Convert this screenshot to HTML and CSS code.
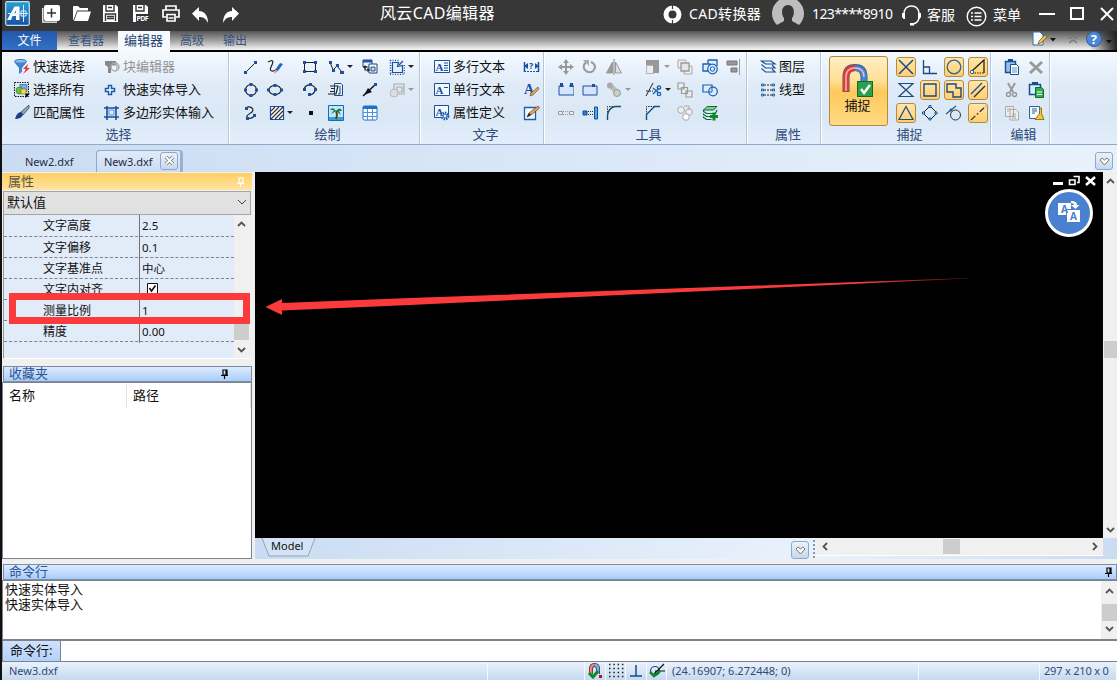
FILE: index.html
```
<!DOCTYPE html>
<html lang="zh-CN">
<head>
    <meta charset="UTF-8">
    <meta name="viewport" content="width=device-width, initial-scale=1.0">
    <title>风云CAD编辑器</title>
    <link rel="stylesheet" href="styles.css">
</head>
<body>
    <!-- Title bar -->
    <header class="titlebar">
        <div class="quick-access">
            <svg class="logo" width="25" height="25" viewBox="0 0 25 25"><defs><linearGradient id="lg" x1="0" y1="0" x2="0" y2="1"><stop offset="0" stop-color="#2a9fd8"/><stop offset="1" stop-color="#1a4fa0"/></linearGradient></defs><rect x=".7" y=".7" width="23.6" height="23.6" rx="1.5" fill="url(#lg)" stroke="#b8e4fa" stroke-width="1.2"/><path d="M2 19 9.500 5.500h5V19h-3.500v-4H7.500L6 19zM9 12.500h2V9.500z" fill="#fff"/><path d="M3 12.500h20M18.500 4v17M16 10h5v5h-5z" fill="none" stroke="#d8f3ff"/></svg>
            <svg class="qa-new" width="18" height="18" viewBox="0 0 18 18"><path d="M.8 3v14.200H15" fill="none" stroke="#fff" stroke-width="1.300"/><rect x="2" y="0" width="16" height="16" rx="2" fill="#fff"/><path d="M9.500 3.500v9M5 8h9" stroke="#333" stroke-width="1.500"/></svg>
            <svg class="qa-open" width="19" height="17" viewBox="0 0 19 17"><path d="M1 15V2q0-1 1-1h4l2 2h8v2.500H5L1.500 15z" fill="#fff"/><path d="M5.500 6.500H19L16 16H2z" fill="#fff"/></svg>
            <svg class="qa-save" width="17" height="17" viewBox="0 0 17 17"><path d="M1 0h13l2 2v15H1z" fill="#fff"/><path d="M4 0v6h8V0M6 2.500h4M3.500 16V9h10v7M5 11.500h7M5 13.500h7" fill="none" stroke="#333" stroke-width="1.400"/></svg>
            <svg class="qa-pdf" width="17" height="17" viewBox="0 0 17 17"><path d="M1 0h13l2 2v15H1z" fill="#fff"/><path d="M4 0v6h8V0M6 2.500h4" fill="none" stroke="#333" stroke-width="1.400"/><path d="M4 9h13v8H4z" fill="#333"/><text x="4.500" y="16" font-size="7" font-weight="700" textLength="12" fill="#fff">PDF</text></svg>
            <svg class="qa-print" width="18" height="17" viewBox="0 0 18 17"><path d="M4 5V1h10v4M4 12H1V5h16v7h-3M5 9.500h8V16H5zM6.500 13h5" fill="none" stroke="#fff" stroke-width="1.700"/></svg>
            <svg class="qa-undo" width="17" height="17" viewBox="0 0 17 17"><path d="M0 6.500 7 0v4c6 0 9 5 9 12-2-4-4-6-9-6v4z" fill="#fff"/></svg>
            <svg width="17" height="17" viewBox="0 0 17 17"><path d="M17 6.500 10 0v4C4 4 1 9 1 16c2-4 4-6 9-6v4z" fill="#fff"/></svg>
        </div>
        <div class="app-title">风云CAD编辑器</div>
        <div class="account">
            <svg width="19" height="19" viewBox="0 0 19 19"><circle cx="9.500" cy="9.500" r="6.500" fill="none" stroke="#fff" stroke-width="5"/><path d="M9.500 0v4M9.500 15v4" stroke="#373737" stroke-width="1.200"/></svg>
            <span class="converter">CAD转换器</span>
            <svg class="avatar" width="32" height="28" viewBox="0 0 32 28"><path d="M5 25A16 16 0 1 1 27 25L20 21v-3c3-3 3-13-4-13s-7 10-4 13v3z" fill="#bdbdbd"/></svg>
            <span class="user">123****8910</span>
            <svg class="headset" width="21" height="21" viewBox="0 0 21 21"><path d="M3 11V8q1-7 7.500-7T18 8v3M18 13q-1 5-6 6" fill="none" stroke="#fff" stroke-width="1.400"/><path d="M1 8h3v6H2.500L1 12zM20 8h-3v6h1.500L20 12zM9 18h4v2.500H9z" fill="#fff"/></svg>
            <span class="service">客服</span>
            <svg class="menu-icon" width="21" height="21" viewBox="0 0 21 21"><circle cx="10.500" cy="10.500" r="9.300" fill="none" stroke="#fff" stroke-width="1.400"/><path d="M5 7h2M5 10.500h2M5 14h2M8.500 7h7M8.500 10.500h7M8.500 14h7" stroke="#fff" stroke-width="1.600"/></svg>
            <span class="menu-label">菜单</span>
            <svg class="win-buttons" width="77" height="18" viewBox="0 0 77 18"><path d="M0 9h16" stroke="#fff" stroke-width="2"/><rect x="32" y="3" width="12" height="11" fill="none" stroke="#fff" stroke-width="2"/><path d="m62 3 12 12M74 3 62 15" stroke="#fff" stroke-width="2"/></svg>
        </div>
    </header>

    <!-- Ribbon tabs -->
    <nav class="tabs">
        <div class="tab file">文件</div>
        <div class="tab viewer">查看器</div>
        <div class="tab active">编辑器</div>
        <div class="tab">高级</div>
        <div class="tab output">输出</div>
        <div class="tab-tools">
            <svg width="85" height="19" viewBox="0 0 85 19"><path d="M1 1h7l3 3v10H1z" fill="#f4faff" stroke="#3b6a9e"/><path d="m6 13 1-3 6-6 2 2-6 6z" fill="#f2c04a" stroke="#6b4a1e" stroke-width=".7"/><path d="M18 7h6l-3 3.500zM74 9h6l-3 3.500z" fill="#111"/><path d="m37 8 4-3 4 3M37 12l4-3 4 3" fill="none" stroke="#777" stroke-width="1.200"/><circle cx="62" cy="8" r="7.500" fill="#4d86d2" stroke="#2b5da8"/><text x="58.700" y="13" font-size="13" font-weight="700" fill="#fff">?</text></svg>
        </div>
    </nav>

    <!-- Ribbon -->
    <section class="ribbon">
        <div class="group g-select">
            <div class="items">
                <div class="item"><svg width="17" height="16" viewBox="0 0 17 16"><ellipse cx="6.500" cy="2.500" rx="6" ry="2" fill="#8cc4f0" stroke="#2b6cb0"/><path d="M.5 3.500 5 9v6l3-2V9l4.500-5.500z" fill="#3f87cc"/><path d="m14 5-5 5h3l-3 5 7-6h-3z" fill="#e8303c"/></svg>快速选择</div>
                <div class="item muted"><svg width="17" height="16" viewBox="0 0 17 16"><path d="M1 2h11v4H9L7 8v6H4V8L1 6z" fill="#888"/><circle cx="11" cy="8" r="4" fill="none" stroke="#aaa" stroke-width="1.500"/><path d="M9 6h4v5" fill="none" stroke="#999"/></svg>块编辑器</div>
                <div class="item"><svg width="17" height="16" viewBox="0 0 17 16"><rect x=".5" y=".5" width="14" height="14" fill="none" stroke="#111" stroke-dasharray="1.500 1"/><rect x="6" y="2.500" width="7" height="7" fill="#6caee8" stroke="#2b6cb0" stroke-width=".7"/><circle cx="5.500" cy="8.500" r="3.500" fill="#6fba4a" stroke="#2f7a28" stroke-width=".7"/><path d="M7 7h5v5H7z" fill="#eadb48" stroke="#8f7d10" stroke-width=".7"/><path d="M11.500 11.500H16L11.500 16z" fill="#000"/></svg>选择所有</div>
                <div class="item"><svg width="17" height="16" viewBox="0 0 17 16"><path d="M4.500 3.500h3v3h3v3h-3v3h-3v-3h-3v-3h3z" fill="#fff" stroke="#1b5aa8" stroke-width="1.500"/></svg>快速实体导入</div>
                <div class="item"><svg width="17" height="16" viewBox="0 0 17 16"><path d="M15 0 7 7l2 3 6-7z" fill="#8ab" stroke="#334" stroke-width=".7"/><path d="M7 7q-4 0-6 7 6 0 8-4z" fill="#1d3f86"/></svg>匹配属性</div>
                <div class="item"><svg width="17" height="16" viewBox="0 0 17 16"><path d="M3 1v14M12 1v14M0 3h15M0 12h15" fill="none" stroke="#174f9c" stroke-width="1.600"/><path d="M5 5h5v5H5z" fill="none" stroke="#5f96d6"/></svg>多边形实体输入</div>
            </div>
            <div class="caption">选择</div>
        </div>

        <div class="group g-draw">
            <div class="items">
                <svg width="16" height="16"><path d="M3 13 13 3" stroke="#222"/><path d="M1 12h3v3H1zM11 2h3v3h-3z" fill="#1c4f9e"/></svg>
                <svg width="16" height="16"><path d="M1 3c7-4 5 1 3 5s1 5 5 3" fill="none" stroke="#222" stroke-width="1.200"/><path d="m8 11 5-7 3 1-5 7z" fill="#2767c4"/><path d="m8 11 3 1-4 3z" fill="#e88"/></svg>
                <svg width="16" height="16"><path d="M2.500 3.500h11v9h-11z" fill="none" stroke="#222"/><path d="M1 2h3v3H1zM12 2h3v3h-3zM1 11h3v3H1zM12 11h3v3h-3z" fill="#1c4f9e"/></svg>
                <div class="cell"><svg width="16" height="16"><path d="m2 3 3 8 4-4 5 6" fill="none" stroke="#222"/><path d="M1 2h3v3H1zM4 10h3v3H4zM8 5h3v3H8zM12 12h4v3h-4z" fill="#1c4f9e"/></svg><i class="arrow"></i></div>
                <svg width="16" height="16"><path d="M1 1h9v7H1z" fill="#eaf4ff" stroke="#246"/><path d="M1 1h9v2.500H1z" fill="#25a"/><path d="M7 5h8v9H7z" fill="#fff" stroke="#246"/><path d="M9 8h4v4H9z" fill="#bcd8f6" stroke="#1c4f9e"/><path d="M3 7v4h4M1.500 8.500 3 7l1.500 1.500M5.500 9.500 7 11l-1.500 1.500" fill="none" stroke="#222" stroke-width="1.200"/></svg>
                <div class="cell"><svg width="16" height="16"><path d="M3.500 3.500h6l-1 4 5-1v7h-10z" fill="#e6f1fd" stroke="#1c4f9e" stroke-width="1.200"/><path d="m10 6 4-4" stroke="#1c4f9e" stroke-width="1.200"/><path d="M1 1.500h10M1.500 1v14M1 15.500h14M15.500 6v9" fill="none" stroke="#1c4f9e" stroke-width="1.600" stroke-dasharray="1 1.500"/></svg><i class="arrow"></i></div>

                <svg width="16" height="16"><circle cx="8" cy="8" r="5.500" fill="none" stroke="#222" stroke-width="1.200"/><path d="M6.500 1h3v3h-3zM6.500 12h3v3h-3zM1 6.500h3v3H1zM12 6.500h3v3h-3z" fill="#1c4f9e"/></svg>
                <svg width="16" height="16"><ellipse cx="8" cy="8" rx="6" ry="4.500" fill="none" stroke="#222" stroke-width="1.200"/><path d="M6.500 2h3v3h-3zM6.500 11h3v3h-3zM0 6.500h3v3H0zM13 6.500h3v3h-3z" fill="#1c4f9e"/></svg>
                <svg width="16" height="16"><path d="M2 7q2-5 7-4 6 2 4 6-2 4-6 4" fill="none" stroke="#222" stroke-width="1.200"/><path d="M1 6h3v3H1zM7 1h3v3H7zM12 6h3v3h-3zM6 11h3v3H6z" fill="#1c4f9e"/></svg>
                <svg width="16" height="16"><path d="M6.500 1.500H13l1.500 1.500v10.500h-8z" fill="#e5f2ff" stroke="#1b4d83"/><path d="M2 4h8L8 12H0M3 6.500h4M2 9.500h4" fill="none" stroke="#222" stroke-width="1.200"/><path d="M12 4v8h-2" fill="none" stroke="#1b4d83"/></svg>
                <svg width="16" height="16"><path d="M1 14 14 2" stroke="#111" stroke-width="1.500"/><path d="m2 13 4-7 4 4z" fill="#111"/><path d="M12 1h3v3h-3z" fill="#1c4f9e"/></svg>
                <div class="cell"><svg width="16" height="16"><path d="M5 2h10v10H5zM8 5h5v5H8z" fill="none" stroke="#aaa" stroke-width="1.200"/><circle cx="5" cy="11" r="4" fill="#ddd" stroke="#bbb"/></svg><i class="arrow dim"></i></div>

                <svg width="16" height="16"><path d="M3 3c4-3 9 1 6 4-4 3-7 4-4 6 3 1 6-1 7-3" fill="none" stroke="#222" stroke-width="1.200"/><path d="M2 2h3v3H2zM3 12h3v3H3zM10 9h3v3h-3z" fill="#1c4f9e"/></svg>
                <div class="cell hatch"><svg width="16" height="16"><path d="M1.500 1.500h13v13h-13z" fill="#fff" stroke="#1c4f9e" stroke-width="1.200"/><path d="m2 6 4-4M2 10l8-8M2 14 14 2M6 14l8-8M10 14l4-4" stroke="#333" stroke-width="1.200"/></svg><i class="arrow"></i></div>
                <svg width="16" height="16"><path d="M7 6h4v4H7z" fill="#111"/></svg>
                <svg width="16" height="16"><path d="M.5.500h15v15H.5z" fill="#bfe6ff" stroke="#1b6eae"/><path d="M1 12h14v3H1z" fill="#3b9cd8"/><path d="M8 14q2-4 0-8" fill="none" stroke="#5b4216" stroke-width="1.800"/><path d="M8 6Q5 1 2 5l4 0-3 4 5-3 5 4-2-4h3Q12 1 8 6z" fill="#16803a"/></svg>
                <svg width="16" height="16"><rect x="1" y="1" width="14" height="14" rx="1.500" fill="#fff" stroke="#1d71c8"/><path d="M1 1h14v3H1z" fill="#1d71c8"/><path d="M1 7.500h14M1 11.500h14M5.500 4v11M10.500 4v11" stroke="#4d94dc"/></svg>
                <span></span>
            </div>
            <div class="caption">绘制</div>
        </div>

        <div class="group g-text">
            <div class="items">
                <div class="item"><svg width="16" height="16"><path d="M.5 1.500h15v12H.5z" fill="#f2f8ff" stroke="#1c4f9e"/><text class="serif-a" x="1.500" y="12">A</text><path d="M10 4h4M10 6.500h4M10 9h4M10 11.500h4" stroke="#1c4f9e"/></svg>多行文本</div>
                <svg width="17" height="16"><path d="M1 12.500h15" stroke="#1c4f9e" stroke-dasharray="2 1"/><path d="M1.500 3v10M15.500 3v10" stroke="#1c4f9e" stroke-width="1.500"/><path d="m1 7 4-3v6zM16 7l-4-3v6z" fill="#1c4f9e"/><text x="6" y="10" font-size="9" font-weight="700" fill="#1c4f9e">?</text></svg>
                <div class="item"><svg width="16" height="16"><path d="M.5 1.500h15v12H.5z" fill="#f2f8ff" stroke="#1c4f9e"/><text class="serif-a" x="1.500" y="12">A</text><path d="M10 5.500h4" stroke="#1c4f9e"/></svg>单行文本</div>
                <svg width="17" height="16"><text class="serif-a big" x="1" y="12">A</text><path d="m7 14 1-3 7-6 1 2-6 6z" fill="#e8a848" stroke="#543" stroke-width=".6"/></svg>
                <div class="item"><svg width="16" height="16"><path d="M.5.500h14v12H.5z" fill="#f2f8ff" stroke="#1c4f9e"/><text class="serif-a" x="1.500" y="11">A</text><circle cx="11" cy="11" r="3.300" fill="#e7f2fd" stroke="#1c5fae" stroke-width="2.200" stroke-dasharray="1.500 1"/><circle cx="11" cy="11" r="2" fill="none" stroke="#1c5fae"/></svg>属性定义</div>
                <svg width="17" height="16"><path d="M1.500 2.500h11v12h-11z" fill="#f2f8ff" stroke="#1c5fae" stroke-width="1.300"/><path d="m4 12 2-4 9-7 1.500 2L8 10z" fill="#e8a848" stroke="#543" stroke-width=".7"/><path d="m4 12 2-4 2 2z" fill="#222"/></svg>
            </div>
            <div class="caption">文字</div>
        </div>

        <div class="group g-tools">
            <div class="items">
                <svg width="16" height="16"><path d="M8 2v12M2 8h12" stroke="#999" stroke-width="2"/><path d="m8 0 3 4H5zM8 16l3-4H5zM0 8l4-3v6zM16 8l-4-3v6z" fill="#999"/></svg>
                <svg width="16" height="16"><path d="M4 3q-4 4-1 8 4 4 8 1 4-4 0-8l-2-1" fill="none" stroke="#999" stroke-width="2"/><path d="M1 1h6v6z" fill="#aaa"/></svg>
                <svg width="16" height="16"><path d="M6.500 3v11H.5zM9.500 3v11h6z" fill="#ddd" stroke="#999"/><path d="M6.500 3v11H.5z" fill="#999"/><path d="M8 0v16" stroke="#888"/></svg>
                <div class="cell"><svg width="16" height="16"><path d="M1 1h13v13H8V6H1z" fill="#999"/><path d="M1.500 6.500h7v8h-7z" fill="#eee" stroke="#777" stroke-dasharray="1 1"/></svg><i class="arrow dim"></i></div>
                <svg width="16" height="16"><path d="M1 1h8v8H1zM7 7h8v8H7z" fill="#eee" stroke="#aaa"/><path d="M4 4h8v8H4z" fill="#e5e5e5" stroke="#999" stroke-width="1.300"/></svg>
                <svg width="17" height="16"><path d="M6 1h9v6M6 1v4M1 5h7v7H1z" fill="#dcecff" stroke="#1c5fae" stroke-width="1.300"/><circle cx="10.500" cy="10" r="4.800" fill="#dcecff" stroke="#1c5fae" stroke-width="1.200"/><circle cx="10.500" cy="10" r="2.200" fill="none" stroke="#1c5fae"/></svg>
                <svg width="16" height="16"><path d="M1 2h10v4H1zM5 9h6v4H5z" fill="#999" stroke="#777"/><path d="M13.500 0v16" stroke="#999"/></svg>

                <svg width="16" height="16"><path d="M1 4h15v9H1z" fill="#d3e4fb" stroke="#1c4f9e"/><path d="M6 3h5v2H6z" fill="#e3edf9"/><path d="M2 1h3v4H2zM12 1h3v4h-3z" fill="#1c4f9e"/></svg>
                <svg width="16" height="16"><path d="M1 4h14v9H1z" fill="#d3e4fb" stroke="#1c4f9e"/><path d="M10 2h3v3h-3z" fill="#1c4f9e"/></svg>
                <div class="cell"><svg width="16" height="16"><path d="m3 3 4 3 5 6" fill="none" stroke="#bbb" stroke-width="5"/><circle cx="4" cy="3.500" r="3" fill="#aaa"/><circle cx="11" cy="11" r="3.500" fill="#ccc" stroke="#999"/></svg><i class="arrow dim"></i></div>
                <div class="cell"><svg width="17" height="16"><path d="M1 14 8 1" stroke="#222"/><path d="M1 9h7" stroke="#222" stroke-dasharray="2 1"/><path d="m8 6 6 5M8 12l6-6" stroke="#1c5fae" stroke-width="1.300"/><circle cx="14" cy="5.500" r="1.700" fill="none" stroke="#1c5fae" stroke-width="1.300"/><circle cx="14" cy="12" r="1.700" fill="none" stroke="#1c5fae" stroke-width="1.300"/></svg><i class="arrow"></i></div>
                <svg width="16" height="16"><path d="M1 1h6v6H1zM4.500 5.500h6v6h-6zM9 9h6v6H9z" fill="#eee" stroke="#999" stroke-width="1.200"/></svg>
                <svg width="17" height="16"><path d="M1 3h9v7H1z" fill="#dcecff" stroke="#1c5fae" stroke-width="1.200"/><circle cx="11" cy="9.500" r="4.300" fill="#dcecff" stroke="#1c5fae" stroke-width="1.200"/><path d="M10 5.500V10H7" fill="none" stroke="#1c5fae"/></svg>
                <span></span>

                <svg width="16" height="16"><path d="M.5 6.500h4v3h-4zM11.500 6.500h4v3h-4z" fill="#eee" stroke="#999"/><path d="M5 6.500h6M5 9.500h6" stroke="#999" stroke-dasharray="1 1"/></svg>
                <svg width="17" height="16"><path d="M1 6h4v4H1z" fill="#2b7fd0" stroke="#174f9c"/><path d="M6 6.500h6M6 9.500h6" stroke="#333" stroke-dasharray="1 1"/><path d="M12.500 2h3v12h-3z" fill="#50a8ec" stroke="#174f9c"/></svg>
                <svg width="16" height="16"><path d="M1.500 15V1.500H15" fill="none" stroke="#333" stroke-dasharray="1.500 1"/><path d="M1.500 15V11Q2 3 9 1.500h6" fill="none" stroke="#174f6c" stroke-width="1.400"/></svg>
                <svg width="16" height="16"><path d="M1.500 15V1.500H15" fill="none" stroke="#333" stroke-dasharray="1.500 1"/><path d="M1.500 15V9.500l8-8H15" fill="none" stroke="#174f8c" stroke-width="1.400"/></svg>
                <svg width="16" height="16"><circle cx="4" cy="5" r="3.300" fill="#eee" stroke="#aaa"/><circle cx="12" cy="7" r="3.300" fill="#eee" stroke="#aaa"/><circle cx="9" cy="12" r="3.300" fill="#fff" stroke="#aaa"/><path d="M7 1h5v4" fill="none" stroke="#aaa"/></svg>
                <svg width="17" height="16"><path d="M5 1.500h10l-3.500 3.500H1.500z" fill="#7fd08a" stroke="#0f6b35"/><path d="M1.500 5v1.500l3 2h9L15 5M1.500 8.500v1l3 2h4M1.500 11.500v1l3 2h5" fill="none" stroke="#0f6b35" stroke-width="1.200"/><path d="M8 11.500h8M12 7.500v8" stroke="#0a8a28" stroke-width="3"/></svg>
                <span></span>
            </div>
            <div class="caption">工具</div>
        </div>

        <div class="group g-props">
            <div class="items">
                <div class="item"><svg width="17" height="16"><path d="M1.500 2h9.500l4 3H5.500z" fill="#e8f3ff" stroke="#174f8c" stroke-width="1.200"/><path d="M1.500 5.500 5.500 9H15l-3-3M1.500 9.500 5.500 13H15l-3-3" fill="none" stroke="#174f8c" stroke-width="1.200"/></svg>图层</div>
                <div class="item"><svg width="17" height="16"><path d="M4 3h9M4 8h9M4 13h9" stroke="#222" stroke-dasharray="2 1"/><path d="M1.500 2h2v2h-2zM12.500 2h2v2h-2zM1.500 7h2v2h-2zM12.500 7h2v2h-2zM1.500 12h2v2h-2zM12.500 12h2v2h-2z" fill="#dcecff" stroke="#1c5fae"/></svg>线型</div>
            </div>
            <div class="caption">属性</div>
        </div>

        <div class="group g-snap">
            <div class="snap-body">
                <div class="snap-button">
                    <svg width="34" height="36" viewBox="0 0 34 36"><path d="M5 29V14Q5 4.500 14 4.500T23 14v8" fill="none" stroke="#355a93" stroke-width="7"/><path d="M5 28.500V14Q5 5 14 5" fill="none" stroke="#e33a35" stroke-width="6"/><path d="M14 5q9 0 9 9v8" fill="none" stroke="#3c86dc" stroke-width="5.500"/><path d="M5 28V14Q5 5 14 5T23 14" fill="none" stroke="#f6b8b0" stroke-width="1.500"/><rect x="16.500" y="18.500" width="15" height="15" fill="#2ca048" stroke="#13692b"/><path d="m20 26 3 4 6-8" fill="none" stroke="#fff" stroke-width="2.500"/></svg>
                    <span>捕捉</span>
                </div>
                <div class="toggles">
                    <div class="toggle on"><svg width="18" height="18"><path d="m2 2 14 14M16 2 2 16" stroke="#1b4a84" stroke-width="1.500"/></svg></div>
                    <div class="toggle"><svg width="18" height="18"><path d="M2.500 2v13.500H16M2.500 9h6v6.500" fill="none" stroke="#1b4a84" stroke-width="1.300"/></svg></div>
                    <div class="toggle on"><svg width="18" height="18"><circle cx="9" cy="9" r="6.800" fill="none" stroke="#2a659e" stroke-width="1.300"/></svg></div>
                    <div class="toggle on"><svg width="18" height="18"><path d="M3 13 15 2v13" fill="none" stroke="#222" stroke-width="1.300"/><path d="M3 15h12" stroke="#222" stroke-dasharray="1.500 1"/><circle cx="3" cy="14" r="1.700" fill="#fff" stroke="#1b5a9a"/></svg></div>
                    <div class="toggle"><svg width="18" height="18"><path d="M2 2.500h14L2 15.500h14z" fill="none" stroke="#1b4a84" stroke-width="1.200"/></svg></div>
                    <div class="toggle on"><svg width="18" height="18"><path d="M3 3h12v12H3z" fill="none" stroke="#1b4a84" stroke-width="1.400"/></svg></div>
                    <div class="toggle on"><svg width="18" height="18"><path d="M2 3h9v4h5v9H8v-5H2z" fill="none" stroke="#1b4a84" stroke-width="1.400"/></svg></div>
                    <div class="toggle on"><svg width="18" height="18"><path d="M2 13 13 2" stroke="#1b5a9a" stroke-width="1.500"/><path d="M5 16 16 5" stroke="#333" stroke-width="1.500"/></svg></div>
                    <div class="toggle on"><svg width="18" height="18"><path d="M9 2.500 16 15.500H2z" fill="none" stroke="#1b4a84" stroke-width="1.200"/></svg></div>
                    <div class="toggle"><svg width="18" height="18"><path d="m9 2 7 7-7 7-7-7z" fill="none" stroke="#222"/><path d="M8 1.500h2v2H8zM8 14h2v2H8zM1.500 8h2v2h-2zM14 8h2v2h-2z" fill="#dcecff" stroke="#1b5a9a"/></svg></div>
                    <div class="toggle"><svg width="18" height="18"><circle cx="10.500" cy="11" r="5" fill="none" stroke="#333"/><path d="M1 10 11 2" stroke="#1b5a9a" stroke-width="1.300"/><circle cx="6" cy="6" r="1.500" fill="#1b5a9a"/></svg></div>
                    <div class="toggle on"><svg width="18" height="18"><path d="M2 16 17 2" stroke="#333" stroke-width="1.200" stroke-dasharray="6 2 2 2"/></svg></div>
                </div>
            </div>
            <div class="caption">捕捉</div>
        </div>

        <div class="group g-edit">
            <div class="items">
                <svg width="16" height="16"><path d="M1.500 2.500h10v11h-10z" fill="#8fc0f2" stroke="#174f8c" stroke-width="1.400"/><path d="M4 0h5v3H4z" fill="#174f8c"/><path d="M6.500 5.500h6l2 2v8h-8z" fill="#fff" stroke="#174f8c"/><path d="M8 9h5M8 11h5M8 13h5" stroke="#5a8cc4"/></svg>
                <svg width="16" height="16"><path d="m2 3 12 11M14 3 2 14" stroke="#999" stroke-width="3"/></svg>
                <svg width="16" height="16"><path d="m4 1 5 9M11 1 6 10" stroke="#999" stroke-width="2"/><circle cx="4.500" cy="12.500" r="2" fill="none" stroke="#999" stroke-width="1.500"/><circle cx="10.500" cy="12.500" r="2" fill="none" stroke="#999" stroke-width="1.500"/></svg>
                <svg width="17" height="16"><path d="M1.500 2.500h11v10h-11z" fill="#dcecff" stroke="#174f8c" stroke-width="1.500"/><path d="M4 0h6v3H4z" fill="#174f8c"/><path d="M7.500 5.500h6l2 2v8h-8z" fill="#2bb04a" stroke="#0e6b2b"/><path d="M9 10h5M9 12.500h5" stroke="#fff"/></svg>
                <svg width="16" height="16"><path d="M1.500 1.500h8v10h-8zM6 4.500h6l2.500 2.500v8H6z" fill="#eee" stroke="#aaa"/><path d="M3 4h4M3 6h2M8 9h4M8 11h4M8 13h4" stroke="#aaa"/></svg>
                <svg width="17" height="16"><path d="M1.500 1.500h10v12h-10z" fill="#f5faff" stroke="#2a659e"/><path d="M4 4h5M4 6h5M4 8h3" stroke="#2a659e"/><path d="M11.500 3h2v5.500l2.500 6H7l4.500-6z" fill="#f0c92e" stroke="#7d610c" stroke-width=".8"/></svg>
            </div>
            <div class="caption">编辑</div>
        </div>
    </section>

    <!-- Document tabs -->
    <section class="doc-tabs">
        <div class="doc-tab">New2.dxf</div>
        <div class="doc-tab current">New3.dxf
            <span class="close"><svg width="11" height="11"><path d="m2 2 7 7M9 2 2 9" stroke="#777" stroke-width="3.500"/><path d="m2 2 7 7M9 2 2 9" stroke="#fff" stroke-width="1.800"/></svg></span>
        </div>
        <span class="heart-button top"><svg width="11" height="9"><path d="m1 3 2-2 2.500 2L8 1l2 2-4.500 5z" fill="#fffbe8" stroke="#777"/></svg></span>
    </section>

    <main class="workspace">
        <aside class="sidebar">
            <div class="panel-title gold">属性
                <svg width="9" height="10"><path d="M3 1h4v5H3zM1 6.500h7M4.500 7v3" fill="none" stroke="#fff" stroke-width="1.200"/></svg>
            </div>
            <div class="combo">默认值
                <svg width="10" height="6"><path d="m1 1 4 4 4-4" fill="none" stroke="#444"/></svg>
            </div>
            <div class="props">
                <div class="prop-rows">
                    <div class="prop"><span>文字高度</span><b>2.5</b></div>
                    <div class="prop"><span>文字偏移</span><b>0.1</b></div>
                    <div class="prop"><span>文字基准点</span><b>中心</b></div>
                    <div class="prop"><span>文字内对齐</span><b class="check"><svg width="11" height="11"><path d="M.5.500h10v10H.5z" fill="#fff" stroke="#111"/><path d="m2.500 5 2 3 4-5.500" fill="none" stroke="#111" stroke-width="1.600"/></svg></b></div>
                    <div class="prop"><span>测量比例</span><b>1</b></div>
                    <div class="prop"><span>精度</span><b>0.00</b></div>
                </div>
                <div class="vscroll props-scroll">
                    <svg width="9" height="6"><path d="m1 5 3.500-3.500L8 5" fill="none" stroke="#555" stroke-width="1.800"/></svg>
                    <i class="thumb"></i>
                    <svg width="9" height="6"><path d="m1 1 3.500 3.500L8 1" fill="none" stroke="#555" stroke-width="1.800"/></svg>
                </div>
                <div class="highlight"></div>
            </div>
            <div class="panel-title blue fav-title">收藏夹
                <svg width="9" height="10"><path d="M3 1h4v5H3zM6 1v5M1 6.500h7M4.500 7v3" fill="none" stroke="#000" stroke-width="1.200"/></svg>
            </div>
            <div class="favorites">
                <span class="fav-col">名称</span>
                <span class="fav-col">路径</span>
            </div>
        </aside>

        <section class="view">
            <div class="view-main">
                <div class="canvas">
                    <svg class="callout" width="848" height="366"><defs><linearGradient id="fade"><stop offset=".85" stop-color="#fb3b3b"/><stop offset="1" stop-color="#fb3b3b" stop-opacity=".3"/></linearGradient></defs><path d="M10.500 135 27 127v4L155 126 713 106v.6L155 133 27 138.500v4.500z" fill="url(#fade)"/></svg>
                    <svg class="mdi" width="46" height="12"><path d="M1 7h10v3H1z" fill="#fff"/><path d="M21.500 1.500h5.500v6h-2M17.500 5h5.500v4.500h-5.500z" fill="none" stroke="#fff" stroke-width="1.600"/><path d="m34 2 9 8M43 2l-9 8" stroke="#fff" stroke-width="2.500"/></svg>
                    <div class="translate">
                        <svg width="24" height="24"><path d="M1 2h13v12H1z" fill="#fff"/><path d="M9.500 8.500h14v13h-14z" fill="#fff" stroke="#4a80d0"/><text x="4" y="12" font-size="10" font-weight="700" fill="#4a80d0">A</text><text x="13" y="19" font-size="10" font-weight="700" fill="#4a80d0">A</text><path d="M14 0q6 0 6 4h2.500L18.500 8 14 4h3q0-2-3-2z" fill="#fff"/></svg>
                    </div>
                </div>
                <div class="vscroll canvas-scroll">
                    <svg width="9" height="6"><path d="m1 5 3.500-3.500L8 5" fill="none" stroke="#555" stroke-width="1.800"/></svg>
                    <i class="thumb"></i>
                    <svg width="9" height="6"><path d="m1 1 3.500 3.500L8 1" fill="none" stroke="#555" stroke-width="1.800"/></svg>
                </div>
            </div>
            <div class="model-bar">
                <div class="model-tab"><svg width="56" height="20"><path d="m1 0 7 18h39l7-18" fill="#d3e3f5" stroke="#8fa3bd"/></svg><span>Model</span></div>
                <span class="heart-button"><svg width="11" height="9"><path d="m1 3 2-2 2.500 2L8 1l2 2-4.500 5z" fill="#fffbe8" stroke="#777"/></svg></span>
                <i class="grip"></i>
                <div class="hscroll">
                    <svg width="6" height="9"><path d="M5 1 1.500 4.500 5 8" fill="none" stroke="#555" stroke-width="1.800"/></svg>
                    <i class="thumb"></i>
                    <svg width="6" height="9"><path d="m1 1 3.500 3.500L1 8" fill="none" stroke="#555" stroke-width="1.800"/></svg>
                </div>
            </div>
        </section>
    </main>

    <!-- Command line -->
    <section class="command">
        <div class="panel-title blue">命令行
            <svg width="9" height="10"><path d="M3 1h4v5H3zM6 1v5M1 6.500h7M4.500 7v3" fill="none" stroke="#000" stroke-width="1.200"/></svg>
        </div>
        <div class="history">
            <div class="lines">
                <p>快速实体导入</p>
                <p>快速实体导入</p>
            </div>
            <div class="vscroll history-scroll">
                <svg width="9" height="6"><path d="m1 5 3.500-3.500L8 5" fill="none" stroke="#555" stroke-width="1.800"/></svg>
                <i class="thumb"></i>
                <svg width="9" height="6"><path d="m1 1 3.500 3.500L8 1" fill="none" stroke="#555" stroke-width="1.800"/></svg>
            </div>
        </div>
        <div class="prompt">
            <label>命令行:</label>
            <div class="prompt-input"></div>
        </div>
    </section>

    <footer class="status">
        <div class="st-file">New3.dxf</div>
        <div class="st-gap"></div>
        <div class="st-icon"><svg width="16" height="16"><path d="M4 11V6q0-4 3.500-4T11 6v5" fill="none" stroke="#333" stroke-width="4"/><path d="M4 11V6q0-4 3.500-4" fill="none" stroke="#f08080" stroke-width="2.500"/><path d="M7.500 2Q11 2 11 6v5" fill="none" stroke="#7fb0f0" stroke-width="2.500"/><path d="m2 10 4 4 5-6" fill="none" stroke="#0a8a28" stroke-width="3"/><path d="M12 12h3v3h-3z" fill="#b01030"/></svg></div>
        <div class="st-icon"><svg width="16" height="16"><path d="M1 1.500h15M1 5.500h15M1 9.500h15M1 13.500h15" stroke="#222" stroke-width="1.500" stroke-dasharray="1.500 2.800"/></svg></div>
        <div class="st-icon"><svg width="16" height="16"><path d="M8 2v11M2 13h12" stroke="#1b4a84" stroke-width="1.500"/></svg></div>
        <div class="st-icon"><svg width="16" height="16"><circle cx="6" cy="8" r="4.500" fill="none" stroke="#1b4a84" stroke-width="1.200"/><path d="m5 11 10-10M6 8h10" stroke="#111" stroke-width="1.200"/><path d="m1 9 4 4 6-5" fill="none" stroke="#0a8a28" stroke-width="2.500"/></svg></div>
        <div class="st-coords">(24.16907; 6.272448; 0)</div>
        <div class="st-gap2"></div>
        <div class="st-size">297 x 210 x 0</div>
    </footer>
</body>
</html>
```
FILE: styles.css
```
/* Base styles */
* {
    margin: 0;
    padding: 0;
    box-sizing: border-box;
}

body {
    display: flex;
    flex-direction: column;
    width: 1117px;
    height: 680px;
    overflow: hidden;
    font-family: "Noto Sans", "Noto Sans CJK SC", sans-serif;
    font-size: 13px;
    line-height: 16px;
    color: #111;
    background: #f0f0f0;
    border-left: 2px solid #101010;
}

svg {
    display: block;
    flex: none;
}

/* Title bar */
.titlebar {
    height: 31px;
    display: flex;
    flex: none;
    background: #373737;
    color: #fff;
    margin-left: -2px;
}

.quick-access {
    display: flex;
    align-items: center;
    height: 27px;
    width: 380px;
    padding-left: 5px;
}

.qa-new { margin-left: 12px; }
.qa-open { margin-left: 12px; }
.qa-save { margin-left: 11px; }
.qa-pdf { margin-left: 13px; }
.qa-print { margin-left: 13px; }
.qa-undo { margin: 3px 13px 0 12px; }
.qa-undo + svg { margin-top: 3px; }
.quick-access .logo { margin-top: -1px; }

.app-title {
    width: 283px;
    font-size: 16px;
    line-height: 27px;
    letter-spacing: .35px;
    white-space: nowrap;
}

.account {
    display: flex;
    align-items: center;
    height: 28px;
    font-size: 14px;
    white-space: nowrap;
}

.converter { width: 74px; margin-left: 7px; letter-spacing: .35px; }
.user { width: 80px; margin-left: 8px; letter-spacing: -.6px; }
.avatar { margin-left: 9px; align-self: flex-start; }
.headset { margin: 3px 0 0 9px; }
.service { margin: 2px 0 0 5px; }
.menu-icon { margin: 4px 0 0 11px; }
.menu-label { margin: 2px 0 0 6px; }
.win-buttons { margin-left: 18px; }

/* Ribbon tabs */
.tabs {
    height: 21px;
    display: flex;
    flex: none;
    border-bottom: 2px solid #000;
    background: linear-gradient(#555, #999 45%, #f6f6f6);
    font-size: 12px;
    line-height: 19px;
    color: #34527e;
}

.tab { padding: 0 10px; }

.tab.file {
    width: 55px;
    text-align: center;
    color: #fff;
    background: linear-gradient(#2457a8, #3272c8);
}

.tab.viewer { width: 61px; padding-left: 11px; }

.tab.active {
    width: 52px;
    height: 21px;
    padding: 0 0 0 6px;
    font-size: 13px;
    color: #24436f;
    background: #f6faff;
}

.tab.output { margin-left: -1px; }

.tab-tools {
    margin-left: auto;
    padding-left: 600px;
    background: linear-gradient(90deg, transparent 96%, #222);
}

/* Ribbon */
.ribbon {
    height: 93px;
    display: flex;
    flex: none;
    background: linear-gradient(#f4f9ff, #e0ebf8 35%, #dae7f5 70%, #e2eefb);
    border-bottom: 1px solid #8fa9cb;
}

.group {
    display: flex;
    flex-direction: column;
    border-right: 1px solid #b4c6dc;
    box-shadow: 1px 0 #fff;
    padding-top: 3px;
}

.group .items {
    display: grid;
    grid-auto-rows: 23px;
    align-items: center;
    height: 71px;
}

.caption {
    text-align: center;
    color: #2f4b78;
    line-height: 17px;
}

.item {
    display: flex;
    align-items: center;
    gap: 3px;
    line-height: 14px;
    white-space: nowrap;
    padding-bottom: 1px;
}

.item svg { margin-top: 1px; }

.item.muted { color: #939393; }

.cell {
    display: flex;
    align-items: center;
    gap: 3px;
}

.cell.hatch { padding-left: 2px; gap: 2px; }

.arrow {
    border: 3px solid transparent;
    border-top-color: #222;
    border-bottom: 0;
}

.arrow.dim { border-top-color: #999; }

.g-select { width: 227px; }
.g-select .items { grid-template-columns: 90px 1fr; padding-left: 12px; }
.g-select .item { gap: 2px; }
.g-select .caption { padding-left: 7px; }

.g-draw { width: 191px; }
.g-draw .items { grid-template-columns: 24px 35px 26px 34px 27px 26px; padding-left: 14px; }
.g-draw .caption { padding-left: 7px; }

.g-text { width: 124px; }
.g-text .items { grid-template-columns: 89px 17px; padding-left: 14px; }
.g-text .caption { padding-left: 8px; }

.g-tools { width: 203px; }
.g-tools .items { grid-template-columns: 24px 24px 39px 32px 25px 24px 17px; padding-left: 14px; }
.g-tools .caption { padding-left: 7px; }

.g-props { width: 74px; }
.g-props .items { padding-left: 13px; align-content: start; }
.g-props .item { gap: 2px; }
.g-props .caption { padding-left: 9px; }

.g-snap { width: 170px; }
.g-snap .caption { padding-left: 8px; }

.snap-body {
    display: flex;
    gap: 8px;
    height: 71px;
    padding: 1px 0 0 8px;
}

.snap-button {
    width: 59px;
    height: 70px;
    display: flex;
    flex-direction: column;
    align-items: center;
    padding: 6px 2px 0 0;
    line-height: 14px;
    border: 1px solid #b58a3c;
    border-radius: 3px;
    background: linear-gradient(#ffefc4, #ffdf95 35%, #ffc95c 50%, #ffd982);
}

.snap-button span { margin-top: -1px; }

.toggles {
    display: grid;
    grid-template-columns: repeat(4, 20px);
    grid-auto-rows: 20px;
    gap: 3px 4px;
    padding-top: 1px;
}

.toggle {
    border: 1px solid transparent;
    border-radius: 3px;
}

.toggle.on {
    border-color: #b58a3c;
    background: linear-gradient(#ffe6ac, #ffcf6e);
}

.g-edit { width: 59px; }
.g-edit .items { grid-template-columns: 24px 17px; padding-left: 13px; }
.g-edit .caption { padding-left: 7px; }

/* Document tabs */
.doc-tabs {
    height: 27px;
    display: flex;
    flex: none;
    align-items: flex-end;
    padding-right: 4px;
    background: linear-gradient(90deg, #cbdcf2, #e9f2fc);
    font-size: 11px;
    color: #1c2c48;
}

.doc-tab {
    width: 94px;
    height: 22px;
    padding-left: 23px;
    line-height: 23px;
}

.doc-tab.current {
    width: 87px;
    display: flex;
    align-items: center;
    justify-content: space-between;
    padding: 0 2px 0 7px;
    border: 1px solid #8fa7c9;
    border-right: 3px solid #9ab0cf;
    border-bottom: 0;
    border-radius: 4px 4px 0 0;
    background: linear-gradient(#e1ebf8, #cbdcf2);
}

.close,
.heart-button {
    width: 18px;
    height: 18px;
    display: flex;
    align-items: center;
    justify-content: center;
    border: 1px solid #8fa7c9;
    border-radius: 3px;
    background: linear-gradient(#e9f2fc, #c6d8ee);
}

.close { margin-top: -2px; }
.heart-button.top { margin: 0 0 2px auto; }

/* Workspace */
.workspace {
    display: flex;
    flex: none;
    height: 392px;
}

.sidebar {
    width: 253px;
    display: flex;
    flex-direction: column;
    padding-top: 1px;
}

.panel-title {
    height: 17px;
    display: flex;
    flex: none;
    align-items: center;
    justify-content: space-between;
    padding: 0 7px 0 6px;
    line-height: 13px;
    color: #2d5594;
}

.panel-title.gold {
    width: 250px;
    color: #5b5640;
    background: linear-gradient(#ffcf62, #ffe3a2);
}

.panel-title.blue {
    height: 16px;
    padding-left: 5px;
    padding-bottom: 1px;
    border: 1px solid #7d8ca3;
    margin-left: 1px;
    background: linear-gradient(#dcebff, #a9cdfb);
}

.combo {
    width: 248px;
    height: 24px;
    display: flex;
    flex: none;
    align-items: center;
    justify-content: space-between;
    margin: 1px 0 0 1px;
    padding: 0 3px 2px;
    border: 1px solid #a5a5a5;
    background: #e1e1e1;
}

.props {
    position: relative;
    width: 248px;
    height: 144px;
    display: flex;
    flex: none;
    border-left: 1px solid #999;
    border-bottom: 1px solid #fff;
    background: #e2ecf9;
    margin-left: 1px;
}

.prop-rows { flex: 1; }

.prop {
    height: 21px;
    display: grid;
    grid-template-columns: 136px 1fr;
    border-bottom: 1px dashed #7b8493;
    font-size: 12px;
    line-height: 22px;
}

.prop:first-child { height: 22px; }
.prop span { padding-left: 39px; border-right: 1px solid #6d7480; }
.prop b { padding-left: 2px; font-size: 11.500px; line-height: 21px; font-weight: 400; }
.prop b.check { padding: 4px 0 0 7px; }

.highlight {
    position: absolute;
    left: 5px;
    top: 78px;
    width: 241px;
    height: 31px;
    border: 7px solid #fb3b3b;
}

.vscroll {
    display: flex;
    flex-direction: column;
    align-items: center;
    background: #f0f0f0;
}

.thumb { background: #cdcdcd; }

.props-scroll { width: 17px; padding: 6px 2px 5px 0; }
.props-scroll .thumb { width: 15px; height: 22px; margin: 91px 0 auto; }

.fav-title {
    width: 249px;
    margin-top: 7px;
    padding-right: 22px;
}

.favorites {
    width: 250px;
    height: 177px;
    display: flex;
    flex: none;
    border: 1px solid #7d8290;
    background: #fff;
}

.fav-col {
    width: 124px;
    height: 24px;
    margin-top: 1px;
    padding-left: 6px;
    line-height: 22px;
    border-right: 1px solid #e2e2e2;
}

/* Drawing view */
.view {
    flex: 1;
    display: flex;
    flex-direction: column;
}

.view-main { display: flex; height: 366px; }

.canvas {
    position: relative;
    width: 848px;
    background: #000;
}

.callout { position: absolute; left: 0; top: 0; }
.mdi { position: absolute; right: 5px; top: 3px; }

.translate {
    position: absolute;
    right: 10px;
    top: 17px;
    width: 48px;
    height: 48px;
    display: flex;
    align-items: center;
    justify-content: center;
    border: 3px solid #fff;
    border-radius: 50%;
    background: #4a80d0;
}

.canvas-scroll { flex: 1; padding: 6px 0 5px 1px; }
.canvas-scroll .thumb { width: 13px; height: 17px; margin: 157px 0 auto; }

.model-bar {
    height: 21px;
    display: flex;
    background: linear-gradient(90deg, #cbdcf2, #e9f2fc 65%, #cbdcf2);
}

.model-tab {
    position: relative;
    width: 536px;
    padding-left: 6px;
}

.model-tab span {
    position: absolute;
    left: 16px;
    top: 0;
    font-size: 11px;
}

.model-bar .heart-button { margin-top: 3px; }

.grip {
    margin: 2px 2px 1px 4px;
    border-left: 2px dotted #8a97aa;
}

.hscroll {
    width: 286px;
    height: 18px;
    display: flex;
    align-items: center;
    padding: 0 5px;
    border-bottom: 1px solid #fff;
    background: #f0f0f0;
}

.hscroll .thumb { width: 17px; height: 15px; margin: 0 auto 0 115px; }

/* Command line */
.command { flex: none; }

.command .panel-title { padding-right: 3px; }

.history {
    height: 60px;
    display: flex;
    border: 1px solid #7d8290;
    border-right: 0;
    background: #fff;
}

.lines {
    flex: 1;
    padding: 1px 2px;
    line-height: 15px;
}

.history-scroll { width: 16px; padding: 7px 0; }
.history-scroll .thumb { width: 15px; height: 17px; margin: 10px 0 auto; }

.prompt {
    height: 22px;
    display: flex;
    border: 1px solid #7d8290;
    border-right: 0;
}

.prompt label {
    width: 58px;
    padding-left: 7px;
    line-height: 19px;
    background: linear-gradient(#cfe2fd, #b3d1fb);
    border-right: 1px solid #7d8290;
}

.prompt-input { flex: 1; background: #fff; }

/* Status bar */
.status {
    flex: 1;
    display: flex;
    background: linear-gradient(#e9f2fc, #c6d9ef);
    font-size: 11px;
    line-height: 17px;
    color: #2f4b78;
}

.status > div { border-right: 1px solid #f3f8fe; }
.st-file { width: 486px; padding-left: 7px; }
.st-gap { width: 97px; }
.st-icon { width: 20.500px; padding-left: 2px; padding-top: 1px; }
.st-coords { width: 252px; padding-left: 5px; }
.st-gap2 { width: 121px; }
.st-size { flex: 1; padding-left: 4px; letter-spacing: -.2px; white-space: nowrap; }

.serif-a {
    font: 700 11px "Liberation Serif", serif;
    fill: #1c4f9e;
}

.serif-a.big { font-size: 14px; }
```
